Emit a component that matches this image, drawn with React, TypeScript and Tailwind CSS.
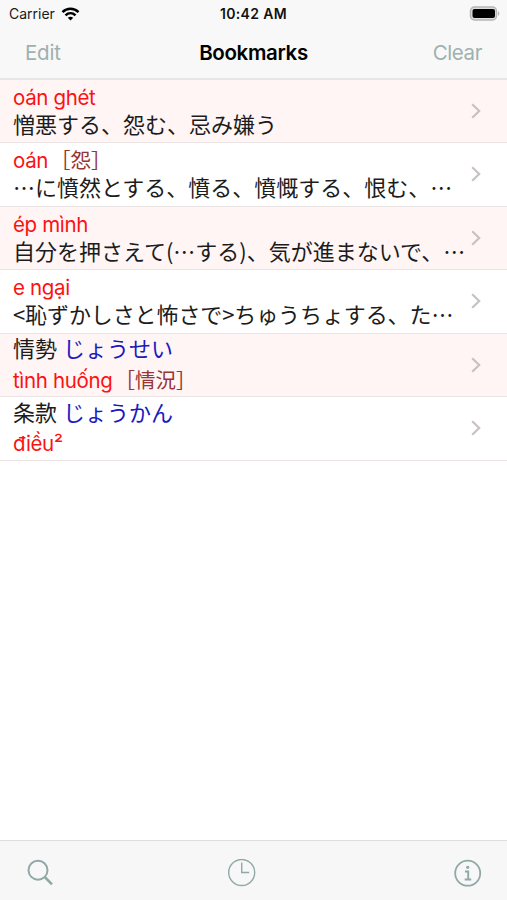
import type { ReactNode } from 'react';

type Tone = 'red' | 'brown' | 'blue' | 'black';

type Part = { text: string; tone: Tone };

type Bookmark = {
  id: number;
  kind: 'vi' | 'ja';
  head: Part[];
  body: Part[];
};

const TONES: Record<Tone, string> = {
  red: "font-['Inter','Noto_Sans_CJK_JP',sans-serif] text-[#fb1212] text-[20.5px] tracking-[-0.35px]",
  brown: "font-['Noto_Sans_CJK_JP',sans-serif] text-[#973535] text-[20.5px] ml-[2px]",
  blue: "font-['Noto_Sans_CJK_JP',sans-serif] text-[#1a1ac0] text-[22px] ml-[1px]",
  black: "font-['Noto_Sans_CJK_JP',sans-serif] text-[#1c1c1c] text-[22px]",
};

const BOOKMARKS: Bookmark[] = [
  {
    id: 1,
    kind: 'vi',
    head: [{ text: 'oán ghét', tone: 'red' }],
    body: [{ text: '憎悪する、怨む、忌み嫌う', tone: 'black' }],
  },
  {
    id: 2,
    kind: 'vi',
    head: [
      { text: 'oán', tone: 'red' },
      { text: '［怨］', tone: 'brown' },
    ],
    body: [{ text: '…に憤然とする、憤る、憤慨する、恨む、…', tone: 'black' }],
  },
  {
    id: 3,
    kind: 'vi',
    head: [{ text: 'ép mình', tone: 'red' }],
    body: [{ text: '自分を押さえて(…する)、気が進まないで、…', tone: 'black' }],
  },
  {
    id: 4,
    kind: 'vi',
    head: [{ text: 'e ngại', tone: 'red' }],
    body: [{ text: '<恥ずかしさと怖さで>ちゅうちょする、た…', tone: 'black' }],
  },
  {
    id: 5,
    kind: 'ja',
    head: [
      { text: '情勢', tone: 'black' },
      { text: ' じょうせい', tone: 'blue' },
    ],
    body: [
      { text: 'tình huống', tone: 'red' },
      { text: '［情況］', tone: 'brown' },
    ],
  },
  {
    id: 6,
    kind: 'ja',
    head: [
      { text: '条款', tone: 'black' },
      { text: ' じょうかん', tone: 'blue' },
    ],
    body: [{ text: 'điều²', tone: 'red' }],
  },
];

function Line({ parts, className }: { parts: Part[]; className: string }) {
  return (
    <div className={`whitespace-pre text-xl ${className}`}>
      {parts.map((part) => (
        <span
          key={part.text}
          className={`leading-none ${TONES[part.tone]} ${part.text.startsWith('<') ? 'tracking-[-0.1px]' : ''}`}
        >
          {part.text}
        </span>
      ))}
    </div>
  );
}

function Row({ item, striped }: { item: Bookmark; striped: boolean }) {
  const vi = item.kind === 'vi';

  return (
    <li
      className={`flex h-[63.5px] items-center border-b border-[#eae4e5] pl-[13px] pr-[26px] ${
        striped ? 'bg-[#fff5f5]' : 'bg-white'
      }`}
    >
      <div className="min-w-0 flex-1 pt-[1.5px]">
        <Line parts={item.head} className={vi ? 'h-[27px] leading-[27px]' : 'h-[30.5px] leading-[31px]'} />
        <Line parts={item.body} className={vi ? 'h-[27px] leading-[27px]' : 'h-[30px] leading-[31px]'} />
      </div>
      <svg className="h-4 w-[10px] shrink-0" viewBox="0 0 10 16" fill="none" stroke="#c8c1c3" strokeWidth="2.2">
        <path d="M1.2 1.2 8.2 8 1.2 14.8" />
      </svg>
    </li>
  );
}

function ToolButton({ label, children }: { label: string; children: ReactNode }) {
  return (
    <button aria-label={label} className="flex size-7 items-center justify-center">
      <svg className="size-7" viewBox="0 0 28 28" fill="none" stroke="#91a9a6">
        {children}
      </svg>
    </button>
  );
}

export default function App() {
  return (
    <div className="flex h-[900px] w-[507px] flex-col overflow-hidden bg-white font-['Inter','Noto_Sans_CJK_JP',sans-serif]">
      <header className="h-[79.5px] shrink-0 border-b-2 border-[#e9e5e7] bg-[#f8f8f8]">
        {/* Status bar */}
        <div className="grid h-[27px] grid-cols-3 items-center pl-[9px] pr-[7px] text-sm text-[#1a1a1a]">
          <div className="flex items-center gap-[6px]">
            <span>Carrier</span>
            <svg className="h-[14px] w-[19px]" viewBox="0 0 18 14" fill="none" stroke="#000" strokeWidth="2.5">
              <path d="M1 5.2C5.5.7 12.5.7 17 5.2" />
              <path d="M4 8.4c2.9-2.8 7.1-2.8 10 0" />
              <path d="M6.3 10.8c1.6-1.5 3.8-1.5 5.4 0L9 13.6z" fill="#000" stroke="none" />
            </svg>
          </div>
          <span className="-ml-[2px] text-center font-semibold tracking-[0.35px] text-[#111]">10:42 AM</span>
          <svg className="h-[15px] w-[31px] justify-self-end" viewBox="0 0 31 15">
            <rect x="1.5" y="1" width="26" height="13" rx="4" fill="#ddd" stroke="#b5b5b5" strokeWidth="1.5" />
            <rect x="3.5" y="3" width="22.5" height="9" rx="2" fill="#000" />
            <path d="M29 5.2c1.8.6 1.8 4 0 4.6z" fill="#b5b5b5" />
          </svg>
        </div>

        {/* Navigation bar */}
        <div className="grid h-[51px] grid-cols-3 items-center px-[25px] pt-px text-[20.5px] text-[#9db1b0]">
          <button className="text-left tracking-[-0.2px]">Edit</button>
          <h1 className="text-center font-semibold tracking-[-0.35px] text-black">Bookmarks</h1>
          <button className="text-right tracking-[-0.4px]">Clear</button>
        </div>
      </header>

      <ul className="flex-1">
        {BOOKMARKS.map((item, i) => (
          <Row key={item.id} item={item} striped={i % 2 === 0} />
        ))}
      </ul>

      {/* Toolbar */}
      <footer className="flex h-[60px] shrink-0 items-center border-t border-[#dedede] bg-[#f7f7f8] pl-[26px] pr-[25px] pt-[5px]">
        <ToolButton label="Search">
          <circle cx="12" cy="11.2" r="9.5" strokeWidth="2" />
          <path d="m18.7 18 7.3 7.3" strokeWidth="2.6" />
        </ToolButton>
        <div className="ml-[174px] mr-auto">
          <ToolButton label="History">
            <circle cx="13.7" cy="13.5" r="13" strokeWidth="1.4" />
            <path d="M13.7 3.5v10h7.5" strokeWidth="1.4" />
          </ToolButton>
        </div>
        <ToolButton label="Info">
          <circle cx="13.7" cy="14.2" r="12.5" strokeWidth="1.8" />
          <path d="M11 12.5h3.2v8M10.7 20.5h6.5" strokeWidth="1.9" />
          <circle cx="13.7" cy="8.3" r="1.6" fill="#91a9a6" stroke="none" />
        </ToolButton>
      </footer>
    </div>
  );
}
